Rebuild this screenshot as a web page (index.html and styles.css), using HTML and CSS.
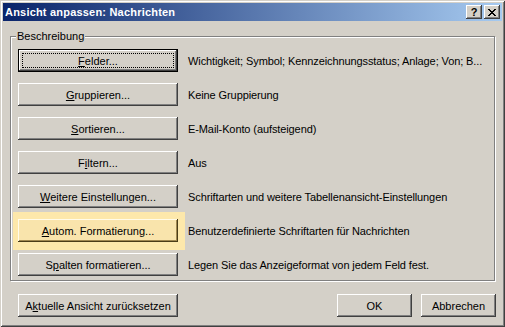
FILE: index.html
```html
<!DOCTYPE html>
<html lang="de">

<head>
    <meta charset="UTF-8">
    <title>Ansicht anpassen: Nachrichten</title>
    <link rel="stylesheet" href="styles.css">
</head>

<body>
    <div class="window">
        <div class="titlebar">
            <span class="title">Ansicht anpassen: Nachrichten</span>
            <div class="caption-buttons">
                <span class="cap-btn help">?</span>
                <span class="cap-btn">
                    <svg width="8" height="7" viewBox="0 0 8 7">
                        <path fill="#000" d="M0 0h2v1h-2z M6 0h2v1h-2z M1 1h2v1h-2z M5 1h2v1h-2z M2 2h4v1h-4z M3 3h2v1h-2z M2 4h4v1h-4z M1 5h2v1h-2z M5 5h2v1h-2z M0 6h2v1h-2z M6 6h2v1h-2z" />
                    </svg>
                </span>
            </div>
        </div>

        <div class="group">
            <div class="group-title">Beschreibung</div>
            <div class="rows">
                <div class="row">
                    <button class="btn btn-list btn-default"><u>F</u>elder...</button>
                    <span class="desc">Wichtigkeit; Symbol; Kennzeichnungsstatus; Anlage; Von; B...</span>
                </div>
                <div class="row">
                    <button class="btn btn-list"><u>G</u>ruppieren...</button>
                    <span class="desc">Keine Gruppierung</span>
                </div>
                <div class="row">
                    <button class="btn btn-list"><u>S</u>ortieren...</button>
                    <span class="desc">E-Mail-Konto (aufsteigend)</span>
                </div>
                <div class="row">
                    <button class="btn btn-list">F<u>i</u>ltern...</button>
                    <span class="desc">Aus</span>
                </div>
                <div class="row">
                    <button class="btn btn-list"><u>W</u>eitere Einstellungen...</button>
                    <span class="desc">Schriftarten und weitere Tabellenansicht-Einstellungen</span>
                </div>
                <div class="row">
                    <span class="highlight">
                        <button class="btn btn-list btn-hot"><u>A</u>utom. Formatierung...</button>
                    </span>
                    <span class="desc">Benutzerdefinierte Schriftarten für Nachrichten</span>
                </div>
                <div class="row">
                    <button class="btn btn-list">S<u>p</u>alten formatieren...</button>
                    <span class="desc">Legen Sie das Anzeigeformat von jedem Feld fest.</span>
                </div>
            </div>
        </div>

        <div class="footer">
            <button class="btn btn-reset">A<u>k</u>tuelle Ansicht zurücksetzen</button>
            <div class="footer-right">
                <button class="btn btn-small">OK</button>
                <button class="btn btn-small">Abbrechen</button>
            </div>
        </div>
    </div>
</body>

</html>
```

FILE: styles.css
```css
body {
    margin: 0;
    font-family: 'Liberation Sans', Arial, sans-serif;
    font-size: 11px;
    color: #000;
    background: #d4d0c8;
}

.window {
    box-sizing: border-box;
    width: 505px;
    height: 327px;
    padding: 3px;
    background: #d4d0c8;
    box-shadow: inset 1px 1px #d4d0c8, inset -1px -1px #404040, inset 2px 2px #fff, inset -2px -2px #808080;
}

.titlebar {
    display: flex;
    align-items: center;
    justify-content: space-between;
    height: 18px;
    padding: 0 2px;
    background: linear-gradient(to right, #0a246a, #a6caf0);
}

.title {
    color: #fff;
    font-weight: bold;
    font-size: 11px;
    letter-spacing: 0.2px;
}

.caption-buttons {
    display: flex;
    gap: 2px;
}

.cap-btn {
    display: flex;
    align-items: center;
    justify-content: center;
    box-sizing: border-box;
    width: 16px;
    height: 14px;
    background: #d4d0c8;
    box-shadow: inset -1px -1px #404040, inset 1px 1px #fff, inset -2px -2px #808080;
}

.cap-btn.help {
    font-weight: bold;
    font-size: 11px;
    line-height: 14px;
}

.group {
    margin: 15px 7px 0 7px;
    padding: 0 0 4px 7px;
    border: 1px solid #808080;
    box-shadow: inset 1px 1px #fff, 1px 1px #fff;
}

.group-title {
    width: max-content;
    margin: -7px 0 0 -2px;
    padding: 0 1px;
    line-height: 13px;
    background: #d4d0c8;
}

.rows {
    display: flex;
    flex-direction: column;
    gap: 11px;
    margin-top: 6px;
}

.row {
    display: flex;
    align-items: center;
    gap: 10px;
}

.desc {
    letter-spacing: -0.1px;
}

.btn {
    position: relative;
    box-sizing: border-box;
    height: 23px;
    padding: 0;
    border: none;
    font: inherit;
    color: #000;
    background: #d4d0c8;
    box-shadow: inset -1px -1px #404040, inset 1px 1px #fff, inset -2px -2px #808080, inset 2px 2px #d4d0c8;
}

.btn-list {
    width: 160px;
}

.btn-default {
    border: 1px solid #000;
}

.btn-default::after {
    content: "";
    position: absolute;
    top: 3px;
    left: 3px;
    right: 3px;
    bottom: 3px;
    border: 1px dotted #000;
}

.highlight {
    display: flex;
    margin: -7px -7px -8px -5px;
    padding: 7px 7px 8px 5px;
    background: #fde8ab;
}

.btn-hot {
    background: #f9e4ac;
    box-shadow: inset -1px -1px #4a3c18, inset 1px 1px #fffbea, inset -2px -2px #a08850, inset 2px 2px #f9e4ac;
}

.footer {
    display: flex;
    justify-content: space-between;
    margin: 13px 6px 0 15px;
}

.footer-right {
    display: flex;
    gap: 9px;
}

.btn-reset {
    width: 160px;
}

.btn-small {
    width: 75px;
}
```
